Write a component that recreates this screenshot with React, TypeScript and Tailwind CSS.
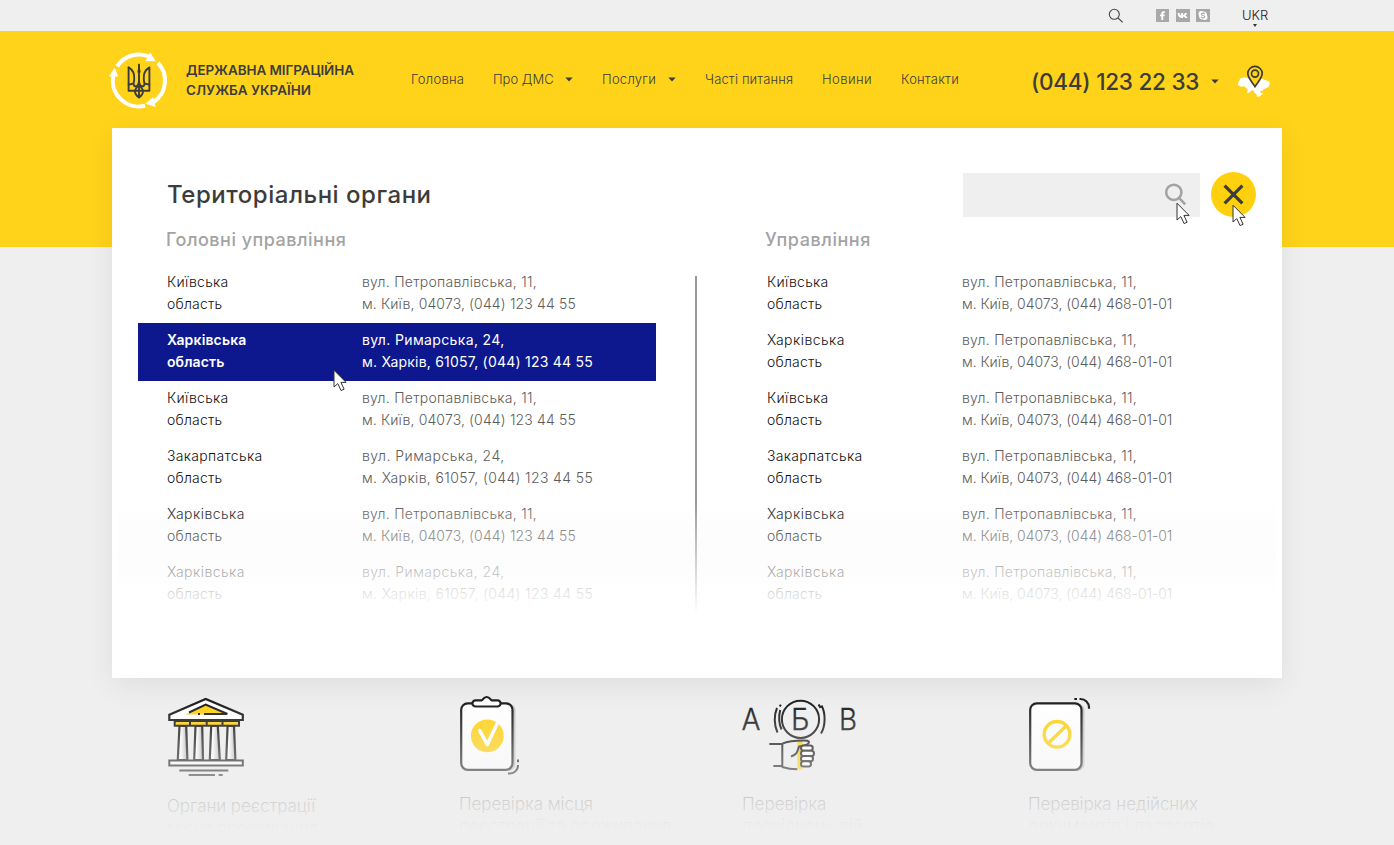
import React from "react";

type Office = { region: string; street: string; contact: string; active?: boolean };

const PETRO = "вул. Петропавлівська, 11,";
const RYMAR = "вул. Римарська, 24,";
const KYIV = "м. Київ, 04073, (044) 123 44 55";
const KHARKIV = "м. Харків, 61057, (044) 123 44 55";
const KYIV_LOCAL = "м. Київ, 04073, (044) 468-01-01";

const mainOffices: Office[] = [
  { region: "Київська", street: PETRO, contact: KYIV },
  { region: "Харківська", street: RYMAR, contact: KHARKIV, active: true },
  { region: "Київська", street: PETRO, contact: KYIV },
  { region: "Закарпатська", street: RYMAR, contact: KHARKIV },
  { region: "Харківська", street: PETRO, contact: KYIV },
  { region: "Харківська", street: RYMAR, contact: KHARKIV },
];

const localOffices: Office[] = [
  { region: "Київська", street: PETRO, contact: KYIV_LOCAL },
  { region: "Харківська", street: PETRO, contact: KYIV_LOCAL },
  { region: "Київська", street: PETRO, contact: KYIV_LOCAL },
  { region: "Закарпатська", street: PETRO, contact: KYIV_LOCAL },
  { region: "Харківська", street: PETRO, contact: KYIV_LOCAL },
  { region: "Харківська", street: PETRO, contact: KYIV_LOCAL },
];

const tracking: Record<string, string> = {
  "Київська": "tracking-[0.28px]",
  "Харківська": "tracking-[0.45px]",
  "Закарпатська": "tracking-[0.3px]",
  [PETRO]: "tracking-[0.26px]",
  [RYMAR]: "tracking-[0.48px]",
  [KYIV]: "tracking-[0.14px]",
  [KHARKIV]: "tracking-[0.37px]",
  [KYIV_LOCAL]: "tracking-[-0.04px]",
};

const activeTracking: Record<string, string> = {
  [RYMAR]: "tracking-[0.36px]",
  [KHARKIV]: "tracking-[0.22px]",
};

function Cursor({ className }: { className: string }) {
  return (
    <svg className={`pointer-events-none absolute ${className}`} width="15" height="23" viewBox="0 0 15 23">
      <path
        d="M1 1.2V18l3.8-3.4 3.3 7 3-1.4-3.2-6.8h5.2z"
        fill="#fff"
        stroke="#333"
        strokeWidth="1"
        strokeLinejoin="round"
      />
    </svg>
  );
}

function Caret({ className = "" }: { className?: string }) {
  return (
    <svg className={className} width="8" height="5" viewBox="0 0 8 5">
      <path d="M.3.4h7.4L4 4.4z" fill="#3c3c3c" />
    </svg>
  );
}

function Emblem() {
  return (
    <svg width="62" height="62" viewBox="0 0 62 62" fill="none">
      <g stroke="#fff" strokeWidth="4">
        <path d="M9.200 16.300A26 26 0 0 1 42 6.900" />
        <path d="M50 12.800A26 26 0 0 1 45.200 52.300" />
        <path d="M37 55.800A26 26 0 0 1 5.400 25" />
      </g>
      <g fill="#fff">
        <path d="M42.300 2.600l5.400 8.600-10.200-.2z" />
        <path d="M37.400 53.800l7.800-6.800 2.400 10z" />
        <path d="M6.600 17.600l3.600 8.800-9.200.2z" />
      </g>
      <g stroke="#3c3c3c" strokeWidth="1.900" strokeLinejoin="round" strokeLinecap="round">
        <path d="M20.600 17.400v23.400h20.800V17.400c-4.300 2.400-6.200 6.600-5.600 12.400.2 3 1.600 4.400-.2 6.200-2.400 1-4.600-1-4.600-5.200" />
        <path d="M20.600 17.400c4.300 2.400 6.200 6.600 5.600 12.400-.2 3-1.600 4.400.2 6.200 2.400 1 4.600-1 4.600-5.200" />
        <path d="M31 14.600v16.200M31 36v11.400M20.600 34.600l4-.8M41.400 34.600l-4-.8" />
        <path d="M31 34.600c-2.600 3-4 4.200-4 7 0 2.400 1.800 4.400 4 5.800 2.200-1.400 4-3.400 4-5.800 0-2.800-1.400-4-4-7z" />
      </g>
      <path d="M31 13l1.700 9.500h-3.400z" fill="#3c3c3c" />
    </svg>
  );
}

function MapPin() {
  return (
    <svg width="34" height="34" viewBox="0 0 34 34" fill="none">
      <path
        d="M.6 19.600l2.600-6.200 3.400-1 4.600.6 5-1.400 5.600.4 3 1.800 2.600 1 4.600 1.600 1 1.400-1.400 4.200-4 1.800-2 1.800-2.600.6 1 2 2.400.4-4.200 3.200-2.400-.4-.4-2.400-2.600-1.600 1-1.400-3.200-.8-2.600 2.600-2.200.2 1-3.400-3.200-3.200-4.200.2z"
        fill="#fff"
      />
      <path
        d="M18 21.600c-3.600-5.400-7.200-8.800-7.200-13a7.200 7.200 0 0 1 14.400 0c0 4.200-3.600 7.600-7.200 13z"
        fill="#ffd31a"
        stroke="#3c3c3c"
        strokeWidth="1.700"
      />
      <circle cx="18" cy="8.600" r="3.500" stroke="#3c3c3c" strokeWidth="1.700" />
    </svg>
  );
}

function Social() {
  return (
    <div className="flex gap-[7px]">
      <svg width="13" height="13" viewBox="0 0 13 13">
        <path d="M0 0h13v13H0z" fill="#a8a8a8" />
        <path
          d="M5.300 11V7.200H4V5.500h1.300V4.300C5.300 2.900 6 2.200 7.400 2.200h1.400v1.700h-.9c-.5 0-.7.2-.7.7v.9h1.600l-.2 1.700H7.200V11z"
          fill="#fff"
        />
      </svg>
      <svg width="14" height="13" viewBox="0 0 14 13">
        <path d="M0 0h14v13H0z" fill="#a8a8a8" />
        <path
          d="M1.600 3.900h2c.2 1.200.8 2.300 1.500 2.600V3.900h2v1.900c.8-.2 1.500-1.100 1.800-1.900h2.200c-.2 1-.9 1.900-1.700 2.500 1 .5 1.700 1.300 2.200 2.600H9.300c-.4-.8-1.200-1.500-2.200-1.600V9H6.300C3.400 9 1.700 7.100 1.600 3.900z"
          fill="#fff"
        />
      </svg>
      <svg width="14" height="13" viewBox="0 0 14 13" className="-ml-px">
        <path d="M0 0h14v13H0z" fill="#a8a8a8" />
        <g transform="translate(.5 0)">
          <circle cx="4.700" cy="4.700" r="2.700" fill="#fff" />
          <circle cx="8.300" cy="8.300" r="2.700" fill="#fff" />
          <circle cx="6.500" cy="6.500" r="4" fill="#fff" />
          <path
            d="M8.300 5.100C8 4.300 7.300 4.100 6.500 4.100c-1 0-1.700.5-1.700 1.200 0 1.600 3.500.8 3.500 2.400 0 .8-.8 1.200-1.800 1.200-.9 0-1.600-.3-1.900-1.100"
            fill="none"
            stroke="#a8a8a8"
            strokeWidth="1.100"
          />
        </g>
      </svg>
    </div>
  );
}

function OfficeRow({ office }: { office: Office }) {
  const { region, street, contact, active } = office;
  return (
    <li
      className={`flex h-[58px] w-[518px] pt-[6px] pl-[29px] text-[14px] leading-[22px] whitespace-nowrap ${
        active ? "bg-[#0d188e] text-white" : ""
      }`}
    >
      <div className={`w-[195px] ${active ? "font-semibold" : "font-light text-[#111]"}`}>
        <div className={active ? "tracking-[0.15px]" : tracking[region]}>{region}</div>
        <div className={active ? "tracking-[0.1px]" : "tracking-[0.2px]"}>область</div>
      </div>
      <div className={active ? "" : "font-light text-[#5c5c5c]"}>
        <div className={active ? activeTracking[street] : tracking[street]}>{street}</div>
        <div className={active ? activeTracking[contact] : tracking[contact]}>{contact}</div>
      </div>
    </li>
  );
}

function BuildingIcon() {
  const columns = [
    "M13.500 32 11.800 66h9.600L20.200 32z",
    "M29.500 32 28.200 66h8.800L36.200 32z",
    "M45.200 32 43.800 66h10L51.800 32z",
    "M61.600 32 60.200 66h9.200L68 32z",
  ];
  return (
    <svg width="82" height="84" viewBox="0 0 82 84" fill="none">
      <defs>
        <linearGradient id="column" x1="0" x2="1" y1="0" y2="0">
          <stop offset=".3" stopColor="#fff" />
          <stop offset=".9" stopColor="#b9bec2" />
        </linearGradient>
      </defs>
      <path d="M3.300 20.800 39.700 5 76.800 20.800V26H3.300z" fill="#fff" stroke="#222" strokeWidth="2.200" />
      <path d="M19.500 20.400 39.700 10.500 61 20.400z" fill="#ffd31a" />
      <path d="M23 18.500 39.700 10.500 61.500 20" stroke="#222" strokeWidth="2" />
      <path d="M32 20h2M38 20h23" stroke="#222" strokeWidth="2" />
      <path d="M8.700 27H73v4.700H8.700z" fill="#ffd31a" stroke="#222" strokeWidth="2" />
      <path d="M24 27v4.700M40.700 27v4.700M56.500 27v4.700" stroke="#222" strokeWidth="2" />
      {columns.map((d) => (
        <path key={d} d={d} fill="url(#column)" stroke="#222" strokeWidth="2.200" />
      ))}
      <path d="M3.300 66.500h73.500v5H3.300z" fill="#fff" stroke="#222" strokeWidth="2" />
      <path d="M13.300 76.500h49M22.700 81H49M52.700 81h4" stroke="#222" strokeWidth="2" />
    </svg>
  );
}

function ClipboardIcon() {
  return (
    <svg width="70" height="84" viewBox="0 0 70 84" fill="none">
      <rect x="8" y="9.500" width="51.500" height="67.500" rx="7" fill="#c4c4c4" />
      <rect x="5.200" y="9.300" width="51.300" height="66.500" rx="6.500" fill="#fff" stroke="#222" strokeWidth="2.200" />
      <path
        d="M19.500 6.300h6.200c1.300 0 1.600-3.300 5-3.300s3.700 3.300 5 3.300h5.800a3 3 0 0 1 0 6.200h-22a3 3 0 0 1 0-6.200z"
        fill="#fff"
        stroke="#222"
        strokeWidth="2.200"
      />
      <circle cx="31.300" cy="41.800" r="16.400" fill="#ffd31a" />
      <path
        d="M23.700 36.700 31.300 50.500 42.200 27.500"
        stroke="#fff"
        strokeWidth="3.600"
        strokeLinecap="round"
        strokeLinejoin="round"
      />
      <path d="M52 79.500h2a8 8 0 0 0 8-8v-.5M62 65.500v2.700" stroke="#222" strokeWidth="2" />
    </svg>
  );
}

function LettersIcon() {
  return (
    <svg width="124" height="84" viewBox="0 0 124 84" fill="none">
      <g fill="#222" stroke="#222" strokeWidth=".3" fontFamily="Inter, sans-serif" fontSize="30" fontWeight="300">
        <text x="3.500" y="36.300" textLength="19" lengthAdjust="spacingAndGlyphs">А</text>
        <text x="53" y="36.300" textLength="18.500" lengthAdjust="spacingAndGlyphs">Б</text>
        <text x="101" y="36.300" textLength="18" lengthAdjust="spacingAndGlyphs">В</text>
      </g>
      <path d="M59.300 43.500h5.200v32h-5.200z" fill="#ffd31a" />
      <g stroke="#222" strokeWidth="2">
        <circle cx="62.500" cy="25.300" r="18.600" />
        <path d="M39.500 38.500c-3.600-7.500-3.600-17.500-.5-24.500M43.600 35.500c-2.600-4.500-3.200-13-1.400-19.500M41.800 12.500l1-1.900" />
        <path d="M83.500 11.500c4.200 7.500 4.200 20.500-.5 28M80.500 10.500c1 1.200 1.600 2.500 2 3.500" />
        <path d="M31.300 50h13M35.300 72h9M44.300 49.500V73.500" />
        <path
          d="M44.300 49.700c7-3.200 14-3.200 22-3.200 5.200 0 5.200 1.300 4 3-1.600 2.300-6.600 2-9.300 3.200-1.800 3.800-1 7.800-8 9.800M44.300 73c5 1.700 10 2.300 15 2.300"
        />
        <g fill="#fff">
          <rect x="63" y="51.400" width="11.800" height="5.300" rx="2.600" />
          <rect x="63" y="56.700" width="13" height="5.300" rx="2.600" />
          <rect x="63" y="62" width="12" height="5.300" rx="2.600" />
          <rect x="63" y="67.300" width="10" height="5.300" rx="2.600" />
        </g>
      </g>
    </svg>
  );
}

function ForbiddenDocIcon() {
  return (
    <svg width="70" height="84" viewBox="0 0 70 84" fill="none">
      <rect x="8" y="9.500" width="51.500" height="67.500" rx="7" fill="#c4c4c4" />
      <rect x="5.200" y="9.300" width="51.300" height="66.500" rx="6.500" fill="#fff" stroke="#222" strokeWidth="2.200" />
      <circle cx="32" cy="40.300" r="12.800" stroke="#ffd31a" strokeWidth="3.400" />
      <path d="M23.500 49 41 32" stroke="#ffd31a" strokeWidth="3.400" />
      <path d="M49.300 5H52M54.500 5h1a8.500 8.500 0 0 1 8.500 8.500v1.300" stroke="#222" strokeWidth="2.200" />
    </svg>
  );
}

const caption = "text-[17px] font-light leading-[22px] text-[#444] whitespace-nowrap";

export default function App() {
  return (
    <div className="flex h-[845px] w-[1394px] flex-col overflow-hidden bg-[#efefef] font-['Inter',sans-serif] text-[#3c3c3c]">
      <div className="flex h-[31px] shrink-0 items-start pl-[1108px]">
        <svg className="mt-[8px]" width="16" height="16" viewBox="0 0 16 16" fill="none" stroke="#444" strokeWidth="1.100">
          <circle cx="6.300" cy="6.300" r="5" />
          <path d="m10 10 4.700 4.300" />
        </svg>
        <div className="mt-[9px] ml-[32px]">
          <Social />
        </div>
        <div className="ml-[32px] flex flex-col items-center pt-[7px]">
          <span className="text-[13px] leading-[17px] font-light text-[#222]">UKR</span>
          <svg width="4" height="3" viewBox="0 0 4 3">
            <path d="M0 0h4L2 3z" fill="#333" />
          </svg>
        </div>
      </div>

      <header className="h-[216px] shrink-0 bg-[#ffd31a]">
        <div className="flex h-[97px] items-start pl-[108px]">
          <div className="mt-[19px]">
            <Emblem />
          </div>
          <div className="mt-[29px] ml-[16px] w-[225px] text-[13.5px] leading-[20px] font-semibold whitespace-nowrap">
            <div className="tracking-[-0.1px]">ДЕРЖАВНА МІГРАЦІЙНА</div>
            <div>СЛУЖБА УКРАЇНИ</div>
          </div>
          <nav className="mt-[38px] flex text-[13px] leading-[20px] font-light whitespace-nowrap">
            <span className="w-[82px] tracking-[0.28px]">Головна</span>
            <span className="flex w-[109px] items-center">
              <span className="w-[72px] tracking-[0px]">Про ДМС</span>
              <Caret />
            </span>
            <span className="flex w-[103px] items-center">
              <span className="w-[66px] tracking-[0.26px]">Послуги</span>
              <Caret />
            </span>
            <span className="w-[117px] tracking-[0.14px]">Часті питання</span>
            <span className="w-[79px] tracking-[0.44px]">Новини</span>
            <span className="w-[130px] tracking-[0.19px]">Контакти</span>
          </nav>
          <div className="mt-[36px] flex items-center">
            <span className="w-[180px] text-[22.5px] leading-[29px] font-medium tracking-[-0.25px] whitespace-nowrap">
              (044) 123 22 33
            </span>
            <Caret />
          </div>
          <div className="mt-[34px] ml-[18px]">
            <MapPin />
          </div>
        </div>
      </header>

      <main className="relative z-10 mx-auto -mt-[119px] h-[550px] w-[1170px] shrink-0 bg-white shadow-[0_8px_28px_rgba(0,0,0,0.07)]">
        <div className="flex items-start pt-[44px] pl-[55px]">
          <h1 className="w-[796px] pt-[8px] text-[24px] leading-[30px] font-medium tracking-[0.52px]">Територіальні органи</h1>
          <div className="relative mt-px flex h-[44px] w-[237px] justify-end bg-[#efefef]">
            <svg className="mt-[10px] mr-[13px]" width="23" height="23" viewBox="0 0 23 23" fill="none" stroke="#a2a2a2" strokeWidth="2.500">
              <circle cx="9.800" cy="9.300" r="7.600" />
              <path d="m15 14.800 6.200 6.500" />
            </svg>
            <Cursor className="top-[29px] left-[213px]" />
          </div>
          <button className="relative ml-[11px] flex size-[45px] items-center justify-center rounded-full bg-[#ffd00d]">
            <svg width="21" height="21" viewBox="0 0 21 21" fill="none" stroke="#3c3c3c" strokeWidth="3.200">
              <path d="m1.600 1.600 17.800 17.800M19.400 1.600 1.600 19.400" />
            </svg>
            <Cursor className="top-[32px] left-[21px]" />
          </button>
        </div>

        <div className="flex pt-[11px] pl-[54px] text-[18px] leading-[24px] font-medium text-[#a3a3a3]">
          <h2 className="w-[599px] tracking-[0.5px]">Головні управління</h2>
          <h2 className="tracking-[0.56px]">Управління</h2>
        </div>

        <div className="relative mx-[6px] mt-[13px] flex h-[352px] bg-[linear-gradient(#fff_67%,#fafafa_84%,#fff_98%)] pl-[20px]">
          <ul className="w-[557px]">
            {mainOffices.map((o, i) => (
              <OfficeRow key={i} office={o} />
            ))}
          </ul>
          <div className="mt-[11px] h-[340px] w-[2px] bg-[#999]" />
          <ul className="ml-[41px]">
            {localOffices.map((o, i) => (
              <OfficeRow key={i} office={o} />
            ))}
          </ul>
          <div className="absolute inset-x-0 bottom-0 h-[116px] bg-[linear-gradient(rgba(255,255,255,0),rgba(255,255,255,0.54)_52%,#fff_98%)]" />
          <Cursor className="top-[104px] left-[215px]" />
        </div>
      </main>

      <section className="relative flex h-[167px] shrink-0 items-start pt-[16px] pl-[166px]">
        <div className="w-[290px]">
          <BuildingIcon />
          <div className={`${caption} mt-[17px] ml-[1px] tracking-[-0.08px]`}>Органи реєстрації</div>
          <div className={`${caption} ml-[1px]`}>місця проживання</div>
        </div>
        <div className="w-[282px]">
          <ClipboardIcon />
          <div className={`${caption} mt-[15px] ml-[3px] tracking-[-0.05px]`}>Перевірка місця</div>
          <div className={`${caption} ml-[3px]`}>реєстрації та проживання</div>
        </div>
        <div className="w-[287px]">
          <LettersIcon />
          <div className={`${caption} mt-[15px] ml-[4px]`}>Перевірка</div>
          <div className={`${caption} ml-[4px]`}>посвідчень дій</div>
        </div>
        <div>
          <ForbiddenDocIcon />
          <div className={`${caption} mt-[15px] ml-[3px] tracking-[-0.09px]`}>Перевірка недійсних</div>
          <div className={`${caption} ml-[3px]`}>документів і паспортів</div>
        </div>
        <div className="absolute inset-0 bg-[linear-gradient(rgba(239,239,239,0)_15%,rgba(239,239,239,0.45)_54%,rgba(239,239,239,0.8)_72%,rgba(239,239,239,0.94)_84%,#efefef_91%)]" />
      </section>
    </div>
  );
}
